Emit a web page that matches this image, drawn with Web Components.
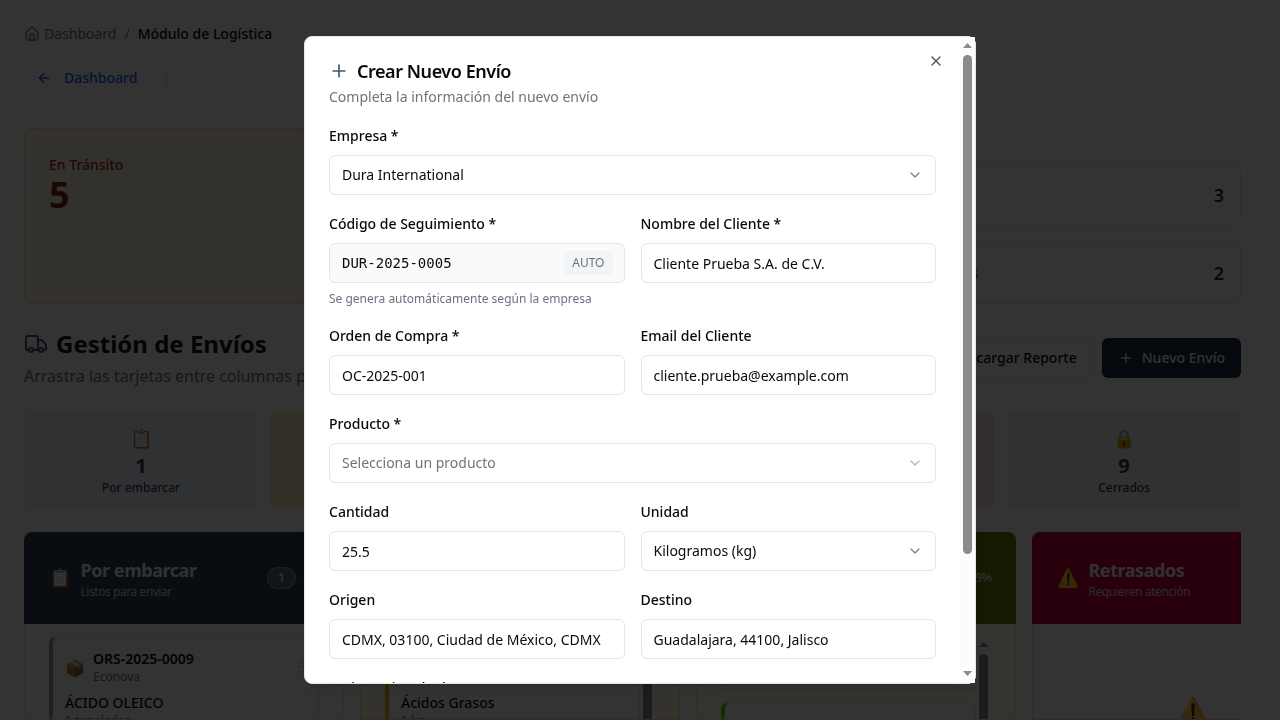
<!DOCTYPE html>
<html lang="es">
<head>
<meta charset="utf-8">
<title>Módulo de Logística</title>
<style>
html,body{margin:0;height:720px;overflow:hidden;background:#fff}
body{font-family:"Noto Sans",sans-serif;font-size:16px;line-height:24px;color:#0a0a0a}
</style>
</head>
<body>
<logistics-page></logistics-page>
<modal-layer></modal-layer>
<script>
const define = (name, css, html) => customElements.define(name, class extends HTMLElement {
  constructor() {
    super();
    this.attachShadow({ mode: 'open' }).innerHTML = `<style>:host,*{box-sizing:border-box}${css}</style>` +
      (typeof html === 'function' ? html(n => this.getAttribute(n) || '') : html);
  }
});

const ICONS = {
  home: '<path d="M15 21v-8a1 1 0 0 0-1-1h-4a1 1 0 0 0-1 1v8"/><path d="M3 10a2 2 0 0 1 .709-1.528l7-5.999a2 2 0 0 1 2.582 0l7 5.999A2 2 0 0 1 21 10v9a2 2 0 0 1-2 2H5a2 2 0 0 1-2-2z"/>',
  back: '<path d="m12 19-7-7 7-7"/><path d="M19 12H5"/>',
  truck: '<path d="M14 18V6a2 2 0 0 0-2-2H4a2 2 0 0 0-2 2v11a1 1 0 0 0 1 1h2"/><path d="M15 18H9"/><path d="M19 18h2a1 1 0 0 0 1-1v-3.65a1 1 0 0 0-.22-.624l-3.48-4.35A1 1 0 0 0 17.52 8H14"/><circle cx="17" cy="18" r="2"/><circle cx="7" cy="18" r="2"/>',
  plus: '<path d="M5 12h14"/><path d="M12 5v14"/>',
  close: '<path d="M18 6 6 18"/><path d="m6 6 12 12"/>',
  chevron: '<path d="m6 9 6 6 6-6"/>',
  download: '<path d="M21 15v4a2 2 0 0 1-2 2H5a2 2 0 0 1-2-2v-4"/><path d="m7 10 5 5 5-5"/><path d="M12 15V3"/>',
  grip: '<circle cx="9" cy="12" r="1"/><circle cx="9" cy="5" r="1"/><circle cx="9" cy="19" r="1"/><circle cx="15" cy="12" r="1"/><circle cx="15" cy="5" r="1"/><circle cx="15" cy="19" r="1"/>'
};
define('ui-icon', ':host{display:block;flex:none}svg{display:block}', a => {
  const s = a('size') || 16;
  return `<svg width="${s}" height="${s}" viewBox="0 0 24 24" fill="none" stroke="currentColor" stroke-width="2" stroke-linecap="round" stroke-linejoin="round">${ICONS[a('name')]}</svg>`;
});

define('scroll-bar', `:host{display:flex;flex-direction:column;align-items:center;width:15px;flex:none;background:#fcfcfc;padding:6px 0 7px}
 i,b{flex:none}i{width:9px;height:5px;background:#8b8b8b;clip-path:polygon(50% 0,100% 100%,0 100%)}
 i.down{transform:rotate(180deg);margin-top:auto}
 b{width:9px;height:var(--thumb,499px);background:#8b8b8b;border-radius:5px;margin-top:7px}`,
 '<i></i><b></b><i class="down"></i>');

define('crumb-bar', `:host{display:flex;align-items:center;height:20px;font-size:14px;line-height:20px}
 ui-icon,.a,.s{color:#737373}.a{margin-left:4px}.s{margin:0 8px}.c{font-weight:500}`,
 '<ui-icon name="home"></ui-icon><span class="a">Dashboard</span><span class="s">/</span><span class="c">Módulo de Logística</span>');

define('back-bar', `:host{display:flex;align-items:center;height:36px;font-size:14px;line-height:20px;font-weight:500;color:#155dfc}
 ui-icon{margin:0 12px}.d{width:1px;height:16px;background:#d4d4d4;margin-left:28.6px}`,
 '<ui-icon name="back"></ui-icon><span>Dashboard</span><span class="d"></span>');

define('count-row', `:host{display:flex;justify-content:space-between;align-items:center;height:62px;border:1px solid #e5e5e5;border-radius:8px;padding:0 16px;font-size:14px}
 span{color:#6a7282}::slotted(b){font-size:18px;font-weight:600;color:#1d293d;line-height:28px}`,
 '<span><slot></slot></span><slot name="n"></slot>');

define('summary-area', `:host{display:grid;grid-template-columns:1fr 353px;gap:24px;height:176px}
 .t{border:1px solid #ffd6a7;border-radius:8px;padding:26px 24px;background:linear-gradient(135deg,#fff7e9,#ffedd4)}
 .l{font-size:14px;line-height:20px;font-weight:500;color:#9f2d00}.n{font-size:36px;line-height:40px;font-weight:700;color:#7e2a0c}
 .r{display:flex;flex-direction:column;gap:16px;justify-content:flex-end}`,
 `<div class="t"><div class="l">En Tránsito</div><div class="n">5</div></div>
  <div class="r"><count-row>Puerto<b slot="n">3</b></count-row><count-row>Retrasados<b slot="n">2</b></count-row></div>`);

define('ui-button', `:host{display:flex;align-items:center;gap:8px;height:40px;padding:0 16px;border-radius:6px;font-size:14px;font-weight:500;border:1px solid #e5e5e5;white-space:nowrap}
 :host([primary]){background:#1a3040;color:#fafafa;border:0}`,
 a => `<ui-icon name="${a('icon')}"></ui-icon><slot></slot>`);

define('board-heading', `:host{display:flex;justify-content:space-between;align-items:center;height:60px}
 h1{display:flex;align-items:center;gap:8px;margin:0;font-size:24px;line-height:32px;font-weight:700;color:#0f172b}
 ui-icon{color:#45556c}p{margin:4px 0 0;line-height:24px;color:#737373;white-space:nowrap}.b{display:flex;gap:8px}`,
 `<div><h1><ui-icon name="truck" size="24"></ui-icon>Gestión de Envíos</h1><p>Arrastra las tarjetas entre columnas para</p></div>
  <div class="b"><ui-button icon="download">Descargar Reporte</ui-button><ui-button primary icon="plus">Nuevo Envío</ui-button></div>`);

define('stat-tile', `:host{display:flex;flex-direction:column;align-items:center;height:96px;border-radius:8px;padding:12px;color:#314158}
 .e{font-size:18px;line-height:28px}.n{font-size:20px;line-height:28px;font-weight:700}.l{font-size:12px;line-height:16px;font-weight:500}`,
 a => `<span class="e">${a('emoji')}</span><span class="n">${a('n')}</span><span class="l"><slot></slot></span>`);

define('stat-strip', `:host{display:grid;grid-template-columns:repeat(5,1fr);gap:12px}`,
 `<stat-tile style="background:#f1f5f9" emoji="📋" n="1">Por embarcar</stat-tile>
  <stat-tile style="background:#fef0c8" emoji="🚚" n="5">En tránsito</stat-tile>
  <stat-tile style="background:#ecfcca" emoji="✅" n="3">Entregados</stat-tile>
  <stat-tile style="background:#ffe2e2" emoji="⚠️" n="2">Retrasados</stat-tile>
  <stat-tile style="background:#f3f4f6" emoji="🔒" n="9">Cerrados</stat-tile>`);

define('board-column', `:host{display:flex;flex-direction:column;width:320px;height:188px;flex:none}
 header{height:92px;display:flex;align-items:center;background:var(--head);border-radius:8px 8px 0 0;color:#fff;padding:0 24px 0 25px}
 .e{font-size:18px;line-height:28px;width:24px;white-space:nowrap;margin-top:-2px}.t{margin:2px 0 0 7.5px;flex:1}
 h2{font-size:18px;line-height:22px;font-weight:700;margin:0;color:#f2f2f2;letter-spacing:-.45px}p{font-size:12px;line-height:16px;margin:3px 0 0;letter-spacing:-.45px;opacity:.8}
 .n{font-size:12px;line-height:20px;font-weight:600;padding:0 10px;border:1px solid #ffffff4d;background:#ffffff33;border-radius:99px;color:#f0f0f0}
 .p{font-size:12px;margin-left:7px;opacity:.85;font-weight:500}
 main{flex:1;display:flex;border:1px solid var(--line);border-top:0;padding:12px 24px 0;background:var(--body,#fff);overflow:hidden}
 .c{flex:1;display:flex;flex-direction:column;gap:12px;min-width:0}`,
 a => `<header><span class="e">${a('emoji')}</span><div class="t"><h2>${a('title')}</h2><p>${a('sub')}</p></div><span class="n">${a('n')}</span><span class="p">${a('pct')}</span></header>
  <main><div class="c"><slot></slot></div>${a('bar') ? '<scroll-bar style="--thumb:200px"></scroll-bar>' : ''}</main>`);

define('ship-card', `:host{display:block;flex:none;height:180px;border:1px solid #e5e5e5;border-left:4px solid var(--c);border-radius:8px;background:#fff;padding:12px 9px 12px 12px}
 .h{display:flex;align-items:center;height:36px}.e{font-size:16px;width:20px;margin-right:8px;padding-top:1px;white-space:nowrap}.g{margin-left:auto;color:#d4d4d4}
 .i{font-size:14px;line-height:20px;font-weight:600}.o{font-size:12px;line-height:16px;color:#6a7282}
 .m{font-size:14px;line-height:20px;font-weight:500;margin-top:8px}.q{font-size:12px;line-height:16px;color:#6a7282}`,
 a => `<div class="h"><span class="e">📦</span><div><div class="i">${a('code')}</div><div class="o">${a('org')}</div></div><span class="g"><ui-icon name="grip"></ui-icon></span></div>
  <div class="m">${a('item')}</div><div class="q">${a('qty')}</div>`);

define('plain-card', `:host{display:block;flex:none;height:54px;border:1px solid #e5e5e5;border-radius:8px;background:#fff}:host([edge]){height:180px;border-left:4px solid #7ccf00}`, '');

define('empty-note', `:host{display:block;text-align:center;font-size:24px;line-height:32px;padding:57px 0 0 1px}`, '<slot></slot>');

define('board-columns', `:host{display:flex;gap:16px;overflow:hidden;height:188px}`,
 `<board-column style="--head:#314158;--line:#e5e9ef" emoji="📋" title="Por embarcar" sub="Listos para enviar" n="1" pct="5%">
   <ship-card style="--c:#90a1b9" code="ORS-2025-0009" org="Econova" item="ÁCIDO OLEICO" qty="1 toneladas"></ship-card></board-column>
  <board-column style="--head:#bb6d00;--line:#fee685;--body:#fffbeb" emoji="🚚" title="En tránsito" sub="En camino" n="5" pct="26%" bar="1">
   <ship-card style="--c:#fdb000" code="DUR-2025-0004" org="Dura" item="Ácidos Grasos" qty="1 kg"></ship-card></board-column>
  <board-column style="--head:#6b7d00;--line:#e6f2c8;--body:#fcfcec" emoji="✅" title="Entregados" sub="Completados" n="3" pct="19%" bar="1">
   <plain-card></plain-card><plain-card edge></plain-card></board-column>
  <board-column style="--head:#c0003c;--line:#ffccd3" emoji="⚠️" title="Retrasados" sub="Requieren atención" n="2" pct="11%"><empty-note>⚠️</empty-note></board-column>`);

define('logistics-page', `:host{display:block;width:1265px;height:720px;padding:24px 24px 0;overflow:hidden}
 back-bar{margin:16px 0 32px}board-heading{margin:24px 0}stat-strip{margin-bottom:24px}`,
 '<crumb-bar></crumb-bar><back-bar></back-bar><summary-area></summary-area><board-heading></board-heading><stat-strip></stat-strip><board-columns></board-columns>');

define('form-field', `:host{display:block;min-width:0}
 label{display:block;height:24px;font-size:14px;line-height:25px;font-weight:500}
 .f{display:flex;align-items:center;justify-content:space-between;height:40px;margin-top:8px;padding:2px 12px 0;border:1px solid #e5e5e5;border-radius:6px;font-size:14px;line-height:20px;background:#fff}
 :host([select]) .f{padding-top:0}:host([placeholder]) .f{color:#737373}
 :host([auto]) .f{background:#f9fafb;padding:0 11px 0 12px}:host([auto]) .f span{font-family:"DejaVu Sans Mono",monospace}
 .f em{font-style:normal;font-size:12px;line-height:24px;padding:0 8px;border-radius:4px;background:#f3f4f6;color:#6a7282}
 ui-icon{opacity:.5}p{margin:8px 0 0;font-size:12px;line-height:16px;color:#6a7282}`,
 a => `<label>${a('label')}</label><div class="f"><span><slot></slot></span>${a('select') ? '<ui-icon name="chevron"></ui-icon>' : ''}${a('auto') ? '<em>AUTO</em>' : ''}</div>${a('auto') ? '<p>Se genera automáticamente según la empresa</p>' : ''}`);

define('shipment-dialog', `:host{display:flex;width:672px;height:648px;background:#fff;border:1px solid #e5e5e5;border-radius:8px;box-shadow:0 10px 15px -3px #0000001a,0 4px 6px -4px #0000001a}
 .v{position:relative;flex:1;overflow:hidden;padding:24px;border-radius:7px 0 0 7px}
 h2{display:flex;align-items:center;gap:8px;height:20px;margin:0;font-size:18px;line-height:18px;font-weight:600;letter-spacing:-.45px}
 h2 ui-icon{color:#45556c}.s{margin:6px 0 16px;font-size:14px;line-height:20px;color:#737373}
 .x{position:absolute;top:16px;right:16px;opacity:.7}
 form{display:grid;grid-template-columns:1fr 1fr;gap:16px}.w{grid-column:span 2}`,
 `<div class="v"><h2><ui-icon name="plus" size="20"></ui-icon>Crear Nuevo Envío</h2><p class="s">Completa la información del nuevo envío</p>
  <ui-icon class="x" name="close"></ui-icon>
  <form>
  <form-field class="w" select="1" label="Empresa *">Dura International</form-field>
  <form-field auto="1" label="Código de Seguimiento *">DUR-2025-0005</form-field>
  <form-field label="Nombre del Cliente *">Cliente Prueba S.A. de C.V.</form-field>
  <form-field label="Orden de Compra *">OC-2025-001</form-field>
  <form-field label="Email del Cliente">cliente.prueba@example.com</form-field>
  <form-field class="w" select="1" placeholder="1" label="Producto *">Selecciona un producto</form-field>
  <form-field label="Cantidad">25.5</form-field>
  <form-field select="1" label="Unidad">Kilogramos (kg)</form-field>
  <form-field label="Origen">CDMX, 03100, Ciudad de México, CDMX</form-field>
  <form-field label="Destino">Guadalajara, 44100, Jalisco</form-field>
  <form-field class="w" label="Fecha Estimada de Entrega"></form-field>
  </form></div><scroll-bar></scroll-bar>`);

define('modal-layer', `:host{position:fixed;inset:0;display:flex;align-items:center;justify-content:center;background:rgba(0,0,0,.8)}`,
 '<shipment-dialog></shipment-dialog>');
</script>
</body>
</html>
